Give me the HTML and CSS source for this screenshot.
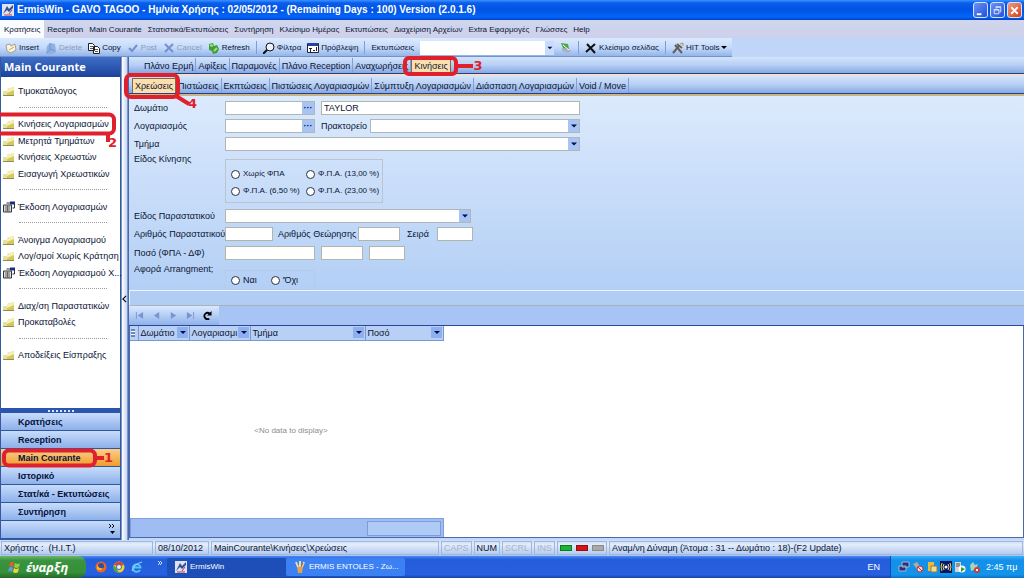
FILE: index.html
```html
<!DOCTYPE html>
<html lang="el">
<head>
<meta charset="utf-8">
<title>ErmisWin</title>
<link rel="stylesheet" href="styles.css">
</head>
<body>
<svg class="defs" aria-hidden="true">
  <symbol id="folder" viewBox="0 0 12 10"><path d="M0 5h4v4H0z" fill="#e4e2a0"/><path d="M4 3l7-2v8H4z" fill="#d6c95c"/><path d="M4 3l7-2v3L4 7z" fill="#f4f0b4"/><path d="M0 9.500h11" stroke="#8f8b5c" stroke-width="1"/></symbol>
  <symbol id="form" viewBox="0 0 12 11"><path d="M3.500 1.500h8v5h-2" fill="#fff" stroke="#333"/><path d="M7 0h5v3H7z" fill="#1c2c8c"/><path d="M.5 3.500h8v7h-8z" fill="#ddd" stroke="#333"/><path d="M2 5.500h5M2 7.500h5M2 9.500h5M4.500 4v6" stroke="#666"/></symbol>
  <symbol id="down" viewBox="0 0 11 11"><path d="M3 4h6L6 7z" fill="#000c50"/></symbol>
  <symbol id="app" viewBox="0 0 12 12"><path d="M0 0h12v12H0z" fill="#dde4ef"/><path d="M1 10l4-8 2 3 4-4v3L7 8 5 6z" fill="#354d91"/><path d="M2 11h8M7 10l3-4" stroke="#b33a55"/></symbol>
</svg>

<header class="titlebar">
  <svg class="i12"><use href="#app"/></svg>
  <h1>ErmisWin - GAVO TAGOO - Ημ/νία Χρήσης : 02/05/2012 - (Remaining Days : 100) Version (2.0.1.6)</h1>
  <div class="winbtns">
    <button aria-label="Minimize"><svg viewBox="0 0 14 14"><path d="M3 10h5v2H3z" fill="#fff"/></svg></button>
    <button aria-label="Restore"><svg viewBox="0 0 14 14"><path d="M5.500 5V3.500h5v5H9M3.500 6.500h5v4h-5zM3 6h6M5 3h6" fill="none" stroke="#dfe8ff"/></svg></button>
    <button class="close" aria-label="Close"><svg viewBox="0 0 14 14"><path d="M3.500 3.500l7 7M10.500 3.500l-7 7" stroke="#fff" stroke-width="2"/></svg></button>
  </div>
</header>

<nav class="menubar">
  <button class="open">Κρατήσεις</button><button>Reception</button><button>Main Courante</button><button>Στατιστικά/Εκτυπώσεις</button><button>Συντήρηση</button><button>Κλείσιμο Ημέρας</button><button>Εκτυπώσεις</button><button>Διαχείριση Αρχείων</button><button>Extra Εφαρμογές</button><button>Γλώσσες</button><button>Help</button>
</nav>

<div class="toolbar">
  <div class="tools">
    <button><svg class="i12" viewBox="0 0 12 12"><path d="M1 3l4-1 1 2 4-2 1 6-5 3-4-2z" fill="#f6f3e4" stroke="#a69f8c"/><path d="M4 8l5-3" stroke="#d9a34a"/></svg>Insert</button>
    <button disabled><svg class="i12" viewBox="0 0 12 12"><path d="M2 4l3-3 5 1 1 8-3 2H1z" fill="#8eb0e2"/><path d="M5 1v6l-3 4M5 7l5 2" stroke="#7098d2" fill="none"/></svg>Delete</button>
    <button><svg class="i12" viewBox="0 0 12 12"><path d="M.5 1.500h4l2 2v5h-6zM5.500 4.500h4l2 2v5h-6z" fill="#fff" stroke="#222"/><path d="M2 4.500h3M2 6.500h3M7 7.500h3M7 9.500h3" stroke="#555"/></svg>Copy</button>
    <button disabled><svg class="i12" viewBox="0 0 12 12"><path d="M2 6l3 3 5-6" fill="none" stroke="#7590cb" stroke-width="2"/></svg>Post</button>
    <button disabled><svg class="i12" viewBox="0 0 12 12"><path d="M2 2l8 8M10 2l-8 8" stroke="#7590cb" stroke-width="2"/></svg>Cancel</button>
    <button><svg class="i12" viewBox="0 0 12 12"><path d="M1 2l4-1 1 3 3-1 2 4-2 4-4 1-1-3-3-1z" fill="#3f9f36"/><path d="M2 3l3 1M6 9l3-3" stroke="#a5df80" stroke-width="2"/></svg>Refresh</button>
    <i class="sep"></i>
    <button><svg class="i12" viewBox="0 0 12 12"><circle cx="7" cy="5" r="4" fill="#e9f2ff" stroke="#111"/><path d="M4 8l-4 4" stroke="#111" stroke-width="2"/></svg>Φίλτρα</button>
    <button><svg class="i12" viewBox="0 0 12 12"><path d="M.5 1.500h11v9H.5z" fill="#fff" stroke="#223"/><path d="M1 1h10v3H1z" fill="#26429a"/><path d="M2 6.500h3M3.500 6v4M6 8.500h2M9.500 5v4" stroke="#223"/></svg>Πρόβλεψη</button>
    <i class="sep"></i>
    <label for="prints">Εκτυπώσεις</label>
    <span class="combo print-combo"><select id="prints"><option></option></select><svg><use href="#down"/></svg></span>
    <button aria-label="Print"><svg class="i12" viewBox="0 0 12 12"><path d="M2 6l6 0 3 3-3 2-6-2z" fill="#a9b2c4"/><path d="M1 1l7 1 1 5-6-1z" fill="#4fa64a"/><path d="M3 3l6 5" stroke="#fff"/></svg></button>
    <i class="sep"></i>
    <button><svg class="i12" viewBox="0 0 12 12"><path d="M2 2l8 9M10 2l-9 8" stroke="#111" stroke-width="2"/></svg>Κλείσιμο σελίδας</button>
    <i class="sep"></i>
    <button><svg class="i12" viewBox="0 0 12 12"><path d="M1 11l6-7M5 2l5 4M3 3l7 8" stroke="#655f5c" stroke-width="2"/><path d="M8 2l3-1v3" stroke="#c08a45" fill="none"/></svg>HIT Tools <svg class="i6" viewBox="0 0 6 6"><path d="M0 1h6L3 4z"/></svg></button>
  </div>
</div>

<div class="workspace">
  <aside class="sidebar">
    <h2>Main Courante</h2>
    <ul class="links">
      <li><a href="#"><svg class="i12"><use href="#folder"/></svg>Τιμοκατάλογος</a></li>
      <li class="rule"></li>
      <li><a href="#"><svg class="i12"><use href="#folder"/></svg>Κινήσεις Λογαριασμών</a>
        <svg class="mark mark2" viewBox="0 0 122 50"><rect x="-4" y="4.500" width="118" height="19" rx="5"/><path d="M108 24v8"/></svg><b class="num num2">2</b></li>
      <li><a href="#"><svg class="i12"><use href="#folder"/></svg>Μετρητά Τμημάτων</a></li>
      <li><a href="#"><svg class="i12"><use href="#folder"/></svg>Κινήσεις Χρεωστών</a></li>
      <li><a href="#"><svg class="i12"><use href="#folder"/></svg>Εισαγωγή Χρεωστικών</a></li>
      <li class="rule"></li>
      <li><a href="#"><svg class="i12"><use href="#form"/></svg>Έκδοση Λογαριασμών</a></li>
      <li class="rule"></li>
      <li><a href="#"><svg class="i12"><use href="#folder"/></svg>Άνοιγμα Λογαριασμού</a></li>
      <li><a href="#"><svg class="i12"><use href="#folder"/></svg>Λογ/σμοί Χωρίς Κράτηση</a></li>
      <li><a href="#"><svg class="i12"><use href="#form"/></svg>Έκδοση Λογαριασμού Χ...</a></li>
      <li class="rule"></li>
      <li><a href="#"><svg class="i12"><use href="#folder"/></svg>Διαχ/ση Παραστατικών</a></li>
      <li><a href="#"><svg class="i12"><use href="#folder"/></svg>Προκαταβολές</a></li>
      <li class="rule"></li>
      <li><a href="#"><svg class="i12"><use href="#folder"/></svg>Αποδείξεις Είσπραξης</a></li>
    </ul>
    <div class="grip"><i></i></div>
    <nav class="modules">
      <button>Κρατήσεις</button>
      <button>Reception</button>
      <button class="active">Main Courante<svg class="mark mark1" viewBox="0 0 110 18"><rect x="3" y="1.500" width="91" height="15" rx="5"/><path d="M95 9h8"/></svg><b class="num num1">1</b></button>
      <button>Ιστορικό</button>
      <button>Στατ/κά - Εκτυπώσεις</button>
      <button>Συντήρηση</button>
      <button class="more" aria-label="More"><svg viewBox="0 0 8 12"><path d="M1 1l2 2-2 2M4 1l2 2-2 2" fill="none" stroke="#111"/><path d="M2 8h5L4.500 11z"/></svg></button>
    </nav>
  </aside>
  <div class="splitter"><button aria-label="Collapse"><svg viewBox="0 0 6 10"><path d="M5 1L1 5l4 4" fill="none" stroke="#111" stroke-width="1.500"/></svg></button></div>

  <main class="content">
    <nav class="tabs tabs-top">
      <button>Πλάνο Ερμή</button><button>Αφίξεις</button><button>Παραμονές</button><button>Πλάνο Reception</button><button>Αναχωρήσεις</button><button class="active">Κινήσεις<svg class="mark mark3" viewBox="0 0 80 22"><rect x="2" y="2" width="51" height="16" rx="4"/><path d="M53 10h17"/></svg><b class="num num3">3</b></button>
    </nav>
    <nav class="tabs tabs-sub">
      <button class="active">Χρεώσεις<svg class="mark mark4" viewBox="0 0 80 38"><rect x="2" y="2" width="52" height="22" rx="5"/><path d="M52 23l13 8"/></svg><b class="num num4">4</b></button><button>Πιστώσεις</button><button>Εκπτώσεις</button><button>Πιστώσεις Λογαριασμών</button><button>Σύμπτυξη Λογαριασμών</button><button>Διάσπαση Λογαριασμών</button><button>Void / Move</button>
    </nav>

    <form class="entry">
      <div class="row"><label class="lead" for="room">Δωμάτιο</label><span class="lookup"><input id="room"><button type="button" aria-label="Find room">···</button></span><input class="guest" aria-label="Guest" value="TAYLOR"></div>
      <div class="row"><label class="lead" for="acc">Λογαριασμός</label><span class="lookup"><input id="acc"><button type="button" aria-label="Find account">···</button></span><label class="agency" for="agency">Πρακτορείο</label><span class="combo c-agency"><select id="agency"><option></option></select><svg><use href="#down"/></svg></span></div>
      <div class="row"><label class="lead" for="dept">Τμήμα</label><span class="combo c-dept"><select id="dept"><option></option></select><svg><use href="#down"/></svg></span></div>
      <div class="row top"><span class="lead" id="kind">Είδος Κίνησης</span>
        <div class="group vat" role="radiogroup" aria-labelledby="kind">
          <label><input type="radio" name="vat">Χωρίς ΦΠΑ</label><label><input type="radio" name="vat">Φ.Π.Α. (13,00 %)</label>
          <label><input type="radio" name="vat">Φ.Π.Α. (6,50 %)</label><label><input type="radio" name="vat">Φ.Π.Α. (23,00 %)</label>
        </div></div>
      <div class="row"><label class="lead" for="doc">Είδος Παραστατικού</label><span class="combo c-doc"><select id="doc"><option></option></select><svg><use href="#down"/></svg></span></div>
      <div class="row"><label class="lead" for="docno">Αριθμός Παραστατικού</label><input id="docno" class="w48"><label class="mid" for="visa">Αριθμός Θεώρησης</label><input id="visa" class="w42"><label class="serial" for="ser">Σειρά</label><input id="ser" class="w36"></div>
      <div class="row amount"><label class="lead" for="amt">Ποσό (ΦΠΑ - ΔΦ)</label><input id="amt" class="w90"><input class="w42" aria-label="ΦΠΑ"><input class="w36" aria-label="ΔΦ"></div>
      <div class="row top last"><span class="lead" id="arr">Αφορά Arrangment;</span>
        <div class="group yesno" role="radiogroup" aria-labelledby="arr"><label><input type="radio" name="arr">Ναι</label><label><input type="radio" name="arr">'Όχι</label></div></div>
    </form>
    <div class="band"></div>
    <div class="navigator"><div class="navbtns">
      <button aria-label="First" disabled><svg viewBox="0 0 10 10"><path d="M1 1h1v8H1zM9 1v8L3 5z"/></svg></button>
      <button aria-label="Previous" disabled><svg viewBox="0 0 10 10"><path d="M8 1v8L2 5z"/></svg></button>
      <button aria-label="Next" disabled><svg viewBox="0 0 10 10"><path d="M2 1v8l6-4z"/></svg></button>
      <button aria-label="Last" disabled><svg viewBox="0 0 10 10"><path d="M8 1h1v8H8zM1 1v8l6-4z"/></svg></button>
      <button aria-label="Refresh"><svg viewBox="0 0 10 10"><path d="M7 8.500A3.500 3.500 0 1 1 7.500 3" fill="none" stroke="#000" stroke-width="2"/><path d="M9.500 0v5h-5z" fill="#000"/></svg></button>
    </div></div>
    <section class="grid">
      <table>
        <thead><tr><th class="c0"><svg viewBox="0 0 6 10"><path d="M1 1h4v8H1z" fill="#6f86b5"/><path d="M1 3.500h4M1 6.500h4" stroke="#fff"/></svg></th>
        <th class="c1"><div><span>Δωμάτιο</span><button aria-label="Filter"><svg><use href="#down"/></svg></button></div></th><th class="c2"><div><span>Λογαριασμι</span><button aria-label="Filter"><svg><use href="#down"/></svg></button></div></th><th class="c3"><div><span>Τμήμα</span><button aria-label="Filter"><svg><use href="#down"/></svg></button></div></th><th class="c4"><div><span>Ποσό</span><button aria-label="Filter"><svg><use href="#down"/></svg></button></div></th></tr></thead>
      </table>
      <p class="empty">&lt;No data to display&gt;</p>
      <div class="totals"><span></span></div>
    </section>
  </main>
</div>

<footer class="status">
  <span class="user">Χρήστης :&nbsp; (H.I.T.)</span><span class="date">08/10/2012</span><span class="path">MainCourante\Κινήσεις\Χρεώσεις</span><span class="key off">CAPS</span><span class="key">NUM</span><span class="key off">SCRL</span><span class="key off">INS</span><span class="lights"><i class="green"></i><i class="red"></i><i></i></span><span class="info">Αναμ/νη Δύναμη (Άτομα : 31 -- Δωμάτιο : 18)-(F2 Update)</span>
</footer>

<div class="taskbar">
  <button class="start"><svg viewBox="0 0 14 14"><path d="M2 3q2-2 4 0L5 7q-2-2-4 0z" fill="#f0582a"/><path d="M7 3q3 2 5 0l-1 4q-2 2-5 0z" fill="#8cd14a"/><path d="M1 8q2-2 4 0l-1 4q-2-2-4 0z" fill="#5b9bf0"/><path d="M6 8q2 2 5 0l-1 4q-2 2-5 0z" fill="#fbcf3a"/></svg>έναρξη</button>
  <div class="quick">
    <a href="#" aria-label="Firefox"><svg class="i12" viewBox="0 0 12 12"><circle cx="6" cy="6" r="5.500" fill="#e9661c"/><circle cx="6" cy="5" r="3" fill="#334d9e"/><path d="M2 3q1 5 6 4-3 4-6 1z" fill="#fbb733"/></svg></a>
    <a href="#" aria-label="Chrome"><svg class="i12" viewBox="0 0 12 12"><circle cx="6" cy="6" r="5.500" fill="#f2d02e"/><path d="M1 4a5.500 5.500 0 0 1 10 0L6 5z" fill="#dd4231"/><path d="M1 4l3 4 2 4A5.500 5.500 0 0 1 1 4z" fill="#4ca648"/><circle cx="6" cy="6" r="2.500" fill="#eef" stroke="#4467a8"/></svg></a>
    <a href="#" aria-label="Internet Explorer"><svg class="i12" viewBox="0 0 12 12"><path d="M3 6.500h6.500A3.800 3.800 0 1 0 9 9" fill="none" stroke="#55c3f5" stroke-width="2"/><path d="M1 10Q3 3 11 1" fill="none" stroke="#9ad9f5"/></svg></a>
    <svg class="chev" viewBox="0 0 6 5"><path d="M1 0l2 2-2 2M3 0l2 2-2 2" fill="none" stroke="#cfe0ff"/></svg>
  </div>
  <button class="task current"><svg class="i12"><use href="#app"/></svg>ErmisWin</button>
  <button class="task"><svg class="i12" viewBox="0 0 12 12"><path d="M3 6h6l-1 6H4z" fill="#e3a34a"/><path d="M4 6L2 1M6 6V0M8 6l2-5" stroke="#e8dca8" stroke-width="2"/><path d="M7 6l2-4" stroke="#d1492f"/></svg>ERMIS ENTOLES - Ζω...</button>
  <span class="lang">EN</span>
  <div class="tray">
    <svg class="i12" viewBox="0 0 12 12"><path d="M4 1h7v5H4zM1 5h7v5H1z" fill="#26337e" stroke="#a9b4cf"/></svg>
    <svg class="i12" viewBox="0 0 12 12"><path d="M1 3l4-2 4 6-4 1z" fill="#b5aaa0"/><circle cx="8" cy="8" r="3" fill="#f3dada" stroke="#c8333a"/><path d="M6 6l4 4" stroke="#c8333a"/></svg>
    <svg class="i12" viewBox="0 0 12 12"><path d="M2 1h6v9H2z" fill="#e9b93c"/><path d="M5 5h6v6H5z" fill="#f6dd8d" stroke="#8e7a48"/></svg>
    <svg class="i12" viewBox="0 0 12 12"><path d="M0 0h12v12H0z" fill="#0a1560"/><path d="M4 3q-2 3 0 6M2 2q-2 4 0 8M8 3q2 3 0 6M10 2q2 4 0 8" fill="none" stroke="#e7df74"/><circle cx="6" cy="6" r="1.500" fill="#fff"/></svg>
    <svg class="i12" viewBox="0 0 12 12"><path d="M1 1h6v10H1z" fill="#d4d4cc"/><path d="M2 3h4M2 5h4" stroke="#555"/><circle cx="8" cy="8" r="3.500" fill="#fff"/><path d="M7 6l4 2-4 3z" fill="#2ba336"/></svg>
    <svg class="i12" viewBox="0 0 12 12"><path d="M2 4l3-3 2 3 3-1-2 5-5 2z" fill="#a8d3b8"/><circle cx="9" cy="9" r="3" fill="#d83a2e"/><path d="M8 8l2 2M10 8l-2 2" stroke="#fff"/></svg>
    <time>2:45 πμ</time>
  </div>
</div>
</body>
</html>
```
FILE: styles.css
```css
* { box-sizing: border-box; }
body { margin: 0; min-height: 100vh; display: flex; flex-direction: column; font: 9px/12px "Liberation Sans", sans-serif; color: #0b1433; background: #c3d8f7; overflow-x: hidden; }
button, input, select { font: inherit; color: inherit; margin: 0; padding: 0; border: 0; background: none; border-radius: 0; }
button { white-space: nowrap; }
a { color: inherit; text-decoration: none; }
h1, h2, p, ul { margin: 0; padding: 0; list-style: none; }
svg { display: block; flex: none; }
.defs { position: absolute; width: 0; height: 0; }
.i12 { width: 12px; height: 12px; }
.i6 { width: 6px; height: 6px; }

.titlebar { display: flex; align-items: center; height: 20px; padding: 0 2px; gap: 3px; color: #fff; background: linear-gradient(#3a93ff, #0a5cec 15%, #0054e3 50%, #0366fb 85%, #0340c0); }
.titlebar h1 { flex: 1; font: bold 10px/14px "Liberation Sans", sans-serif; white-space: nowrap; }
.winbtns { display: flex; gap: 2px; }
.winbtns button { width: 15px; height: 16px; border: 1px solid #d5e2ff; border-radius: 3px; background: linear-gradient(135deg, #6d93f5, #2050d8); }
.winbtns .close { background: linear-gradient(135deg, #f09a7c, #d6401a); }

.menubar { display: flex; height: 18px; font-size: 8px; line-height: 17px; background: linear-gradient(#cfd6ee, #cdd0ea); }
.menubar button { padding: 0 3px; height: 18px; }
.menubar .open { background: #fafbff; padding: 0 4px; }

.toolbar { display: flex; height: 19px; font-size: 8px; line-height: 18px; background: #bfd6f8; }
.tools { display: flex; align-items: center; gap: 6px; padding: 0 5px; height: 19px; background: linear-gradient(#dceaff, #c4dafa 50%, #94b4e8 95%, #4c6cae); }
.tools button { display: flex; align-items: center; gap: 2px; }
.tools button:disabled { color: #8d9bb5; }
.sep { width: 1px; height: 13px; background: #7d9fd8; }

.combo { position: relative; display: flex; height: 14px; background: #fff; border: 1px solid #b0b7b8; }
.combo select { width: 100%; appearance: none; }
.combo svg { position: absolute; right: 0; top: 0; width: 11px; height: 12px; background: #a9c4f3; pointer-events: none; }
.print-combo { width: 134px; border: 0; }
.print-combo svg { width: 9px; height: 14px; background: #c9dcfa; }

.workspace { flex: 1; display: flex; }
.sidebar { width: 121px; display: flex; flex-direction: column; border: 1px solid #35589f; border-top: 0; background: #fff; }
.sidebar h2 { height: 20px; padding-left: 3px; color: #fff; font: bold 11px/20px "Open Sans", sans-serif; background: linear-gradient(#3f6fc8, #1c429b); }
.links { flex: 1; padding-top: 5px; }
.links li { position: relative; height: 17px; }
.links li:nth-child(even) { height: 16px; }
.links a { display: flex; align-items: center; gap: 3px; height: 17px; padding-left: 2px; white-space: nowrap; }
.links .rule::before { content: ""; display: block; margin: 0 13px 0 18px; padding-top: 8px; border-bottom: 1px dotted #9a9a9a; }
.grip { display: flex; justify-content: center; align-items: center; height: 5px; background: #2b55ad; }
.grip i { width: 26px; border-top: 2px dotted #dce8ff; }
.modules button { position: relative; display: block; width: 100%; height: 18px; padding-left: 17px; text-align: left; font: bold 9px/18px "Liberation Sans", sans-serif; color: #06123c; border-bottom: 1px solid #2f569f; background: linear-gradient(#c8dcfb, #8db1ea); }
.modules .active { background: linear-gradient(#fbd08c, #f09c2c); }
.modules .more { display: flex; justify-content: flex-end; padding: 2px 4px; }
.more svg { width: 8px; height: 12px; }

.splitter { width: 7px; display: flex; align-items: center; border: solid #7f96c4; border-width: 0 1px; background: linear-gradient(90deg, #fff, #c4d6f4); }
.splitter svg { width: 5px; height: 8px; }

.content { flex: 1; min-width: 0; display: flex; flex-direction: column; padding-bottom: 2px; border-left: 1px solid #4a69ac; }
.tabs { display: flex; background: linear-gradient(#d3e4fb, #b7cff5 50%, #86a9e3); border-bottom: 1px solid #283e86; }
.tabs button { position: relative; height: 15px; padding: 0 2px; border-right: 1px solid #7f9fd8; line-height: 14px; }
.tabs-top { height: 17px; padding: 1px 0 0 13px; }
.tabs .active { background: #fbdfae; border: 1px solid #7a6a4e; border-bottom: 0; }
.tabs-sub { height: 20px; padding: 2px 0 0 3px; border-top: 2px solid #f2dfd2; }

.entry { padding: 3px 6px 0 5px; border-top: 2px solid #c9b487; background: linear-gradient(#dceafd, #b3cff5); }
.row { display: flex; align-items: center; height: 18px; }
.row.top { align-items: flex-start; }
.row input:not([type]) { height: 14px; padding: 0 2px; background: #fff; border: 1px solid #b0b7a8; }
.lead { width: 91px; white-space: nowrap; }
.lookup { display: flex; width: 90px; height: 14px; margin-right: 6px; background: #fff; border: 1px solid #b0b7b8; }
.row .lookup input { flex: 1; min-width: 0; border: 0; height: 12px; }
.lookup button { width: 12px; background: #a9c4f3; font-weight: bold; line-height: 10px; color: #001a70; }
.guest { width: 259px; }
.agency { width: 49px; }
.c-agency { width: 210px; }
.c-dept { width: 355px; }
.c-doc { width: 246px; }
.w36 { width: 36px; }
.w42 { width: 42px; }
.w48 { width: 48px; }
.w90 { width: 90px; }
.mid { width: 85px; padding-left: 5px; }
.serial { width: 37px; padding-left: 7px; }
.amount { gap: 6px; height: 20px; }
.amount .lead { margin-right: -6px; }
.group { border: 1px solid #bcc5cb; }
.group label { display: flex; align-items: center; gap: 3px; white-space: nowrap; }
.group input { appearance: none; flex: none; width: 9px; height: 9px; border: 1px solid #28324a; border-radius: 50%; background: #fff; }
.vat { display: grid; grid-template-columns: 75px auto; align-content: end; row-gap: 5px; width: 158px; height: 44px; padding: 0 5px 5px; margin-top: 6px; font-size: 8px; }
.row.top { height: 54px; }
.yesno { display: flex; gap: 14px; align-items: center; height: 20px; margin-top: 7px; padding: 0 5px; width: 90px; border-color: #b5cbea; }
.row.last { height: 27px; }
.band { height: 16px; border: solid #eef4fc; border-width: 1px 0 0 1px; background: #b1cdf3; border-bottom: 1px solid #a9b3b8; }
.navigator { height: 20px; background: #a8c4f5; border-bottom: 1px solid #2c479a; }
.navbtns { display: flex; align-items: center; gap: 8px; width: 90px; height: 19px; padding: 0 6px; background: linear-gradient(#dbe9ff, #8fb1ea); }
.navbtns svg { width: 9px; height: 9px; fill: #7795d0; }

.grid { flex: 1; display: flex; flex-direction: column; background: #fff; border: 1px solid #4a69ac; border-top: 0; }
.grid table { width: 314px; table-layout: fixed; border-collapse: collapse; }
.grid th { height: 14px; padding: 0; font-weight: normal; text-align: left; background: #b9d0f6; border-right: 1px solid #7997d0; border-bottom: 1px solid #7997d0; }
.grid th div { display: flex; justify-content: space-between; padding: 0 1px 0 2px; }
.grid th span { white-space: nowrap; }
.grid th button, .grid th button svg { width: 11px; height: 11px; }
.grid th button { background: #8fb0ee; }
.c0 { width: 8px; }
.c0 svg { width: 6px; height: 10px; }
.c1 { width: 51px; }
.c2 { width: 61px; }
.c3 { width: 115px; }
.empty { flex: 1; width: 322px; padding-top: 84px; text-align: center; font-size: 8px; color: #8c8c8c; }
.totals { width: 314px; height: 19px; display: flex; justify-content: flex-end; padding: 2px; background: #a0bdf3; border: 1px solid #7f9fdc; border-bottom: 0; }
.totals span { width: 74px; height: 15px; background: #aecaf5; border: 1px solid #7d9dd6; }

.status { display: flex; gap: 2px; height: 16px; padding: 1px; line-height: 12px; background: linear-gradient(#c9dcf8, #e3edfb 30%, #a9c3ee); }
.status > span { border: 1px solid #9fb6de; padding: 0 2px; white-space: nowrap; }
.user { width: 152px; }
.date { width: 54px; }
.path { width: 228px; }
.off { color: #a8b3c8; }
.info { flex: 1; }
.lights { display: flex; gap: 4px; align-items: center; }
.lights i { width: 12px; height: 6px; background: #a9a9a9; border: 1px solid #8a8a8a; }
.lights .green { background: #17b531; border-color: #0d7a1e; }
.lights .red { background: #d11; border-color: #811; }

.taskbar { display: flex; align-items: center; height: 22px; color: #fff; background: linear-gradient(#4b8af5, #245edb 15%, #2660e0 85%, #1941a5); }
.start { display: flex; align-items: center; gap: 4px; width: 86px; height: 22px; padding-left: 8px; border-radius: 0 8px 8px 0; font: italic bold 13px/20px "Noto Sans", sans-serif; background: linear-gradient(#6cb867, #3a9440 20%, #368f38 75%, #22682a); }
.start svg { width: 14px; height: 14px; }
.quick { display: flex; gap: 6px; width: 81px; padding-left: 9px; }
.chev { width: 6px; height: 5px; margin-left: 8px; }
.task { display: flex; align-items: center; gap: 3px; width: 119px; height: 18px; padding-left: 8px; font-size: 8px; border-radius: 2px; background: #3c81f3; }
.task.current { background: #1e4fb8; }
.lang { margin-left: auto; padding-right: 10px; }
.tray { display: flex; align-items: center; width: 134px; gap: 2px; height: 22px; padding-left: 7px; border-left: 1px solid #0a4eb0; background: linear-gradient(#38b0f5, #1290ea 20%, #1393ea 85%, #0c6fc0); }
.tray time { margin-left: 4px; white-space: nowrap; }

.mark { position: absolute; z-index: 2; fill: none; stroke: #e0202c; stroke-width: 4; pointer-events: none; overflow: visible; }
.num { position: absolute; z-index: 3; color: #e0202c; font: bold 13px/13px "DejaVu Sans", sans-serif; }
.mark1 { left: 0; top: 0; width: 110px; height: 18px; }
.num1 { left: 103px; top: 2px; }
.mark2 { left: -1px; top: -5px; width: 122px; height: 50px; }
.num2 { left: 107px; top: 21px; }
.mark3 { left: -9px; top: -3px; width: 80px; height: 22px; }
.num3 { left: 61px; top: 0; }
.mark4 { left: -9px; top: -6px; width: 80px; height: 38px; }
.num4 { left: 55px; top: 18px; }
```
